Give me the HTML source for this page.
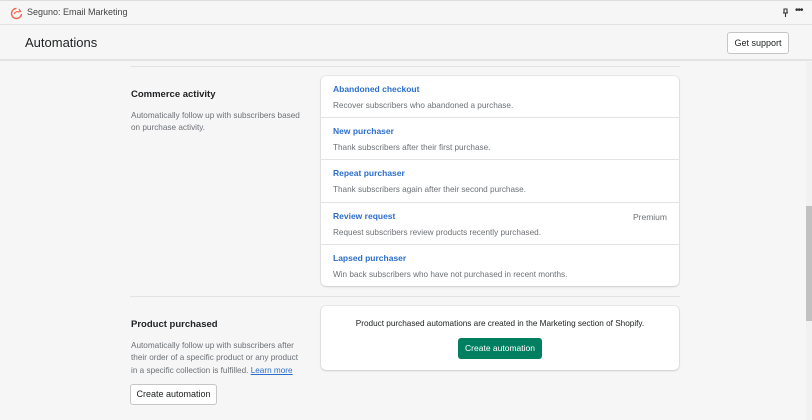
<!DOCTYPE html>
<html><head><style>
*{box-sizing:border-box;margin:0;padding:0}
body{width:812px;height:420px;overflow:hidden;background:#f6f6f7;font-family:"Liberation Sans",sans-serif;position:relative;color:#202223}
.top{position:absolute;left:0;top:0;width:812px;height:25px;background:#f6f6f7;border-top:1px solid #ddd;border-bottom:1px solid #e1e3e5}
.top .t{position:absolute;left:27px;top:6px;font-size:9px;color:#444}
.hdr{position:absolute;left:0;top:25px;width:812px;height:36px;background:#f6f6f7;border-bottom:2px solid #e1e3e5}
.hdr .h{position:absolute;left:25px;top:10px;font-size:13px;color:#202223}
.btn{position:absolute;background:#fff;border:1px solid #c4c6c8;border-radius:3px;font-size:9px;color:#202223;text-align:center}
.line{position:absolute;height:1px;background:#e1e3e5}
.card{position:absolute;background:#fff;border-radius:5px;box-shadow:0 0 0 1px rgba(0,0,0,.05),0 1px 2px rgba(0,0,0,.12)}
.row{height:42.2px;border-bottom:1px solid #e1e3e5;padding:8px 12px 0;position:relative}
.row:last-child{border-bottom:none}
.row a{display:block;color:#2c6ecb;font-weight:bold;font-size:8.5px;text-decoration:none}
.row p{font-size:8.2px;color:#6d7175;margin-top:7px}
.prem{position:absolute;right:12px;top:9px;font-size:8.5px;color:#6d7175}
.st{position:absolute;font-weight:bold;font-size:9.5px;color:#202223}
.sd{position:absolute;font-size:8.2px;color:#6d7175;line-height:12.3px}
</style></head><body>
<div class="top">
<svg style="position:absolute;left:10px;top:6px" width="13" height="13" viewBox="0 0 13 13"><path d="M6.5 1.5A5 5 0 1 0 11.5 7" fill="none" stroke="#f0674f" stroke-width="1.4"/><path d="M4 7c1-2 3-3 5-2M9 2l1.5 2.5L8 5" fill="none" stroke="#f0674f" stroke-width="1.2"/></svg>
<span class="t">Seguno: Email Marketing</span>
<svg style="position:absolute;left:782px;top:7px" width="7" height="10" viewBox="0 0 7 10"><path d="M1.5 1h4M2 1v4h3V1M1 5h5M3.5 5v4" fill="none" stroke="#333" stroke-width="1.1"/></svg>
<span style="position:absolute;left:795px;top:4px;font-size:10px;color:#333;letter-spacing:-1px">•••</span>
</div>
<div class="hdr"><span class="h">Automations</span>
<div class="btn" style="left:727px;top:7px;width:62px;height:22px;line-height:20px">Get support</div></div>
<div class="line" style="left:130px;top:66px;width:550px"></div>
<div class="st" style="left:131px;top:89px">Commerce activity</div>
<div class="sd" style="left:131px;top:110px">Automatically follow up with subscribers based<br>on purchase activity.</div>
<div class="card" style="left:321px;top:76px;width:358px;height:210px">
<div class="row"><a>Abandoned checkout</a><p>Recover subscribers who abandoned a purchase.</p></div>
<div class="row"><a>New purchaser</a><p>Thank subscribers after their first purchase.</p></div>
<div class="row"><a>Repeat purchaser</a><p>Thank subscribers again after their second purchase.</p></div>
<div class="row"><a>Review request</a><span class="prem">Premium</span><p>Request subscribers review products recently purchased.</p></div>
<div class="row"><a>Lapsed purchaser</a><p>Win back subscribers who have not purchased in recent months.</p></div>
</div>
<div class="line" style="left:130px;top:296px;width:550px"></div>
<div class="st" style="left:131px;top:319px">Product purchased</div>
<div class="sd" style="left:131px;top:340px">Automatically follow up with subscribers after<br>their order of a specific product or any product<br>in a specific collection is fulfilled. <span style="color:#2c6ecb;text-decoration:underline">Learn more</span></div>
<div class="btn" style="left:130px;top:384px;width:87px;height:21px;line-height:19px">Create automation</div>
<div class="card" style="left:321px;top:306px;width:358px;height:64px">
<div style="position:absolute;left:0;width:100%;top:13px;text-align:center;font-size:8.2px;color:#202223">Product purchased automations are created in the Marketing section of Shopify.</div>
<div style="position:absolute;left:137px;top:32px;width:84px;height:21px;background:#008060;border-radius:3px;color:#fff;font-size:8.5px;text-align:center;line-height:21px">Create automation</div>
</div>
<div style="position:absolute;left:806px;top:62px;width:6px;height:358px;background:#f1f1f1"></div>
<div style="position:absolute;left:806px;top:206px;width:6px;height:115px;background:#c1c1c1"></div>
</body></html>
